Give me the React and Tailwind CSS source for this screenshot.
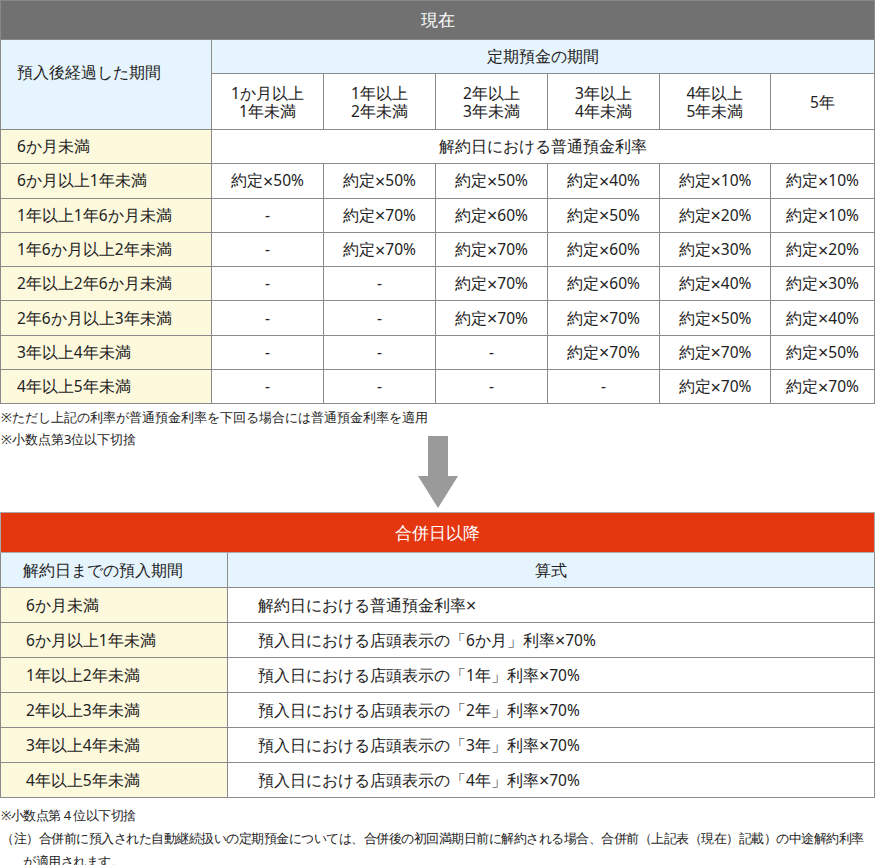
const cols = ['1か月以上\n1年未満', '1年以上\n2年未満', '2年以上\n3年未満', '3年以上\n4年未満', '4年以上\n5年未満', '5年'];

const rows = [
  ['6か月以上1年未満', ['50', '50', '50', '40', '10', '10']],
  ['1年以上1年6か月未満', [null, '70', '60', '50', '20', '10']],
  ['1年6か月以上2年未満', [null, '70', '70', '60', '30', '20']],
  ['2年以上2年6か月未満', [null, null, '70', '60', '40', '30']],
  ['2年6か月以上3年未満', [null, null, '70', '70', '50', '40']],
  ['3年以上4年未満', [null, null, null, '70', '70', '50']],
  ['4年以上5年未満', [null, null, null, null, '70', '70']],
];

const after = [
  ['6か月未満', '解約日における普通預金利率'],
  ['6か月以上1年未満', '預入日における店頭表示の「6か月」利率×70%'],
  ['1年以上2年未満', '預入日における店頭表示の「1年」利率×70%'],
  ['2年以上3年未満', '預入日における店頭表示の「2年」利率×70%'],
  ['3年以上4年未満', '預入日における店頭表示の「3年」利率×70%'],
  ['4年以上5年未満', '預入日における店頭表示の「4年」利率×70%'],
];

export default function App() {
  return (
    <div className="w-[875px] bg-white text-[#222] text-[15.5px] font-['Noto_Sans_CJK_JP','Noto_Sans',sans-serif]">
      <div className="h-[40px] bg-[#717171] text-white text-[17px] flex items-center justify-center border border-[#888]">現在</div>
      <div className="grid grid-cols-[210px_111px_111px_111px_111px_110px_1fr] grid-rows-[33px_55px] auto-rows-[33.3px] gap-px bg-[#8a8a8a] border-x border-b border-[#8a8a8a]">
        <div className="row-span-2 bg-[#e6f4fd] flex items-center pl-4 pb-6">預入後経過した期間</div>
        <div className="col-span-6 bg-[#e6f4fd] flex items-center justify-center">定期預金の期間</div>
        {cols.map((c) => (
          <div key={c} className="bg-white flex items-center justify-center text-center whitespace-pre-line leading-[18px]">{c}</div>
        ))}
        <div className="bg-[#fdf9dd] flex items-center pl-4">6か月未満</div>
        <div className="col-span-6 bg-white flex items-center justify-center">解約日における普通預金利率</div>
        {rows.map(([label, vals]) => (
          <>
            <div key={label} className="bg-[#fdf9dd] flex items-center pl-4">{label}</div>
            {vals.map((v, i) => (
              <div key={label + i} className="bg-white flex items-center justify-center">{v ? <>約定<span className="text-[18px] leading-none">×</span>{v}%</> : '-'}</div>
            ))}
          </>
        ))}
      </div>
      <div className="text-[13px] leading-[22px] mt-[2px] pl-[1px]">
        <div>※ただし上記の利率が普通預金利率を下回る場合には普通預金利率を適用</div>
        <div>※小数点第3位以下切捨</div>
      </div>
      <div className="flex justify-center -mt-[14px] h-[76px] pl-[1px]">
        <svg width="40" height="72" viewBox="0 0 40 72">
          <rect x="10" y="0" width="20" height="42" fill="#9a9a9a" />
          <polygon points="0,40 40,40 20,72" fill="#9a9a9a" />
        </svg>
      </div>
      <div className="h-[41px] bg-[#e4360f] text-white text-[17px] flex items-center justify-center border border-[#aaa]">合併日以降</div>
      <div className="grid grid-cols-[226px_1fr] auto-rows-[34px] gap-px bg-[#8a8a8a] border-x border-b border-[#8a8a8a]">
        <div className="bg-[#e6f4fd] flex items-center pl-[22px]">解約日までの預入期間</div>
        <div className="bg-[#e6f4fd] flex items-center justify-center">算式</div>
        {after.map(([a, b]) => (
          <>
            <div key={a} className="bg-[#fdf9dd] flex items-center pl-[25px]">{a}</div>
            <div key={a + 'b'} className="bg-white flex items-center pl-[30px]">{b.split('×')[0]}<span className="text-[18px] leading-none">×</span>{b.split('×')[1]}</div>
          </>
        ))}
      </div>
      <div className="text-[12.5px] leading-[23px] mt-[6px] pl-[1px] tracking-[-0.04em]">
        <div>※小数点第４位以下切捨</div>
        <div className="pl-[22px] -indent-[22px]">（注）合併前に預入された自動継続扱いの定期預金については、合併後の初回満期日前に解約される場合、合併前（上記表（現在）記載）の中途解約利率が適用されます。</div>
      </div>
    </div>
  );
}
